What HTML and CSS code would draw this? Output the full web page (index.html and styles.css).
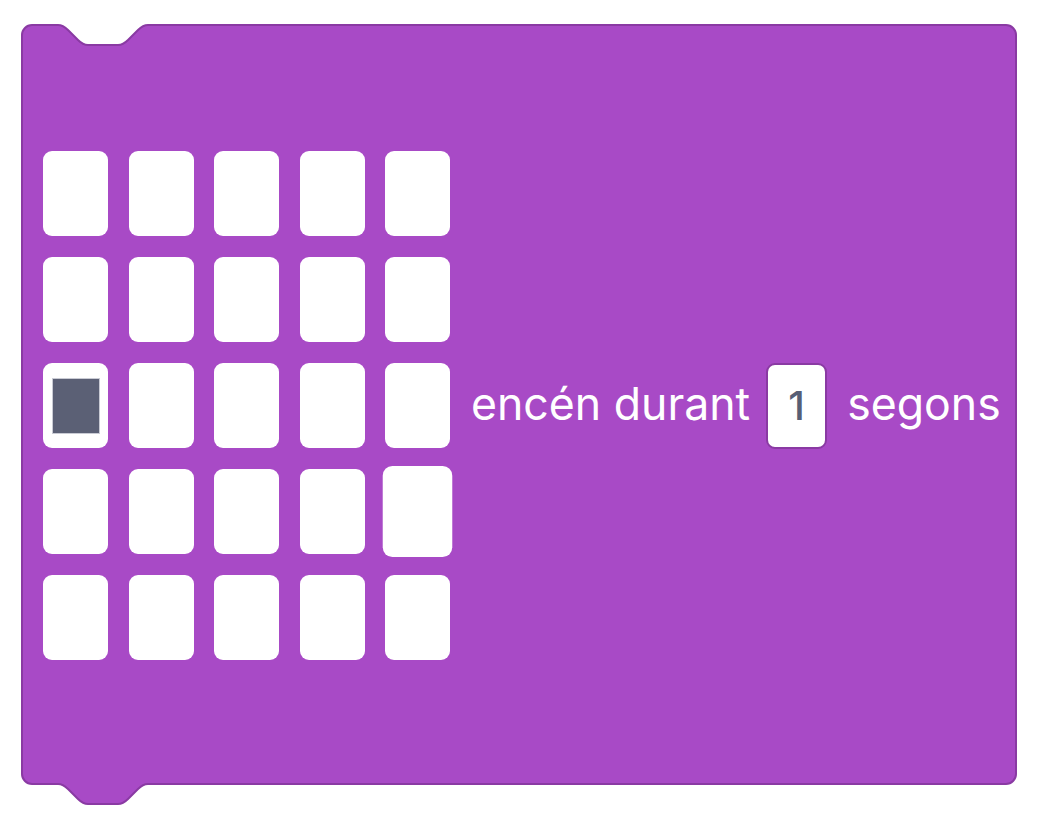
FILE: index.html
```html
<!DOCTYPE html>
<html>
<head>
<meta charset="utf-8">
<link rel="stylesheet" href="styles.css">
</head>
<body>
<div class="page">
  <div class="block">
    <svg class="block-shape" width="1000" height="790" viewBox="-3 -3 1000 790">
      <path d="M0,10 a10,10 0 0 1 10,-10 H36 c5,0 7.5,2.5 10,5 l10,10 c2.5,2.5 5,5 10,5 h30 c5,0 7.5,-2.5 10,-5 l10,-10 c2.5,-2.5 5,-5 10,-5 H984 a10,10 0 0 1 10,10 V749 a10,10 0 0 1 -10,10 H126 c-5,0 -7.5,2.5 -10,5 l-10,10 c-2.5,2.5 -5,5 -10,5 h-30 c-5,0 -7.5,-2.5 -10,-5 l-10,-10 c-2.5,-2.5 -5,-5 -10,-5 H10 a10,10 0 0 1 -10,-10 Z" fill="#a84ac6" stroke="#8a3aa3" stroke-width="2"/>
    </svg>
    <div class="content">
      <div class="matrix">
        <div class="cell"></div><div class="cell"></div><div class="cell"></div><div class="cell"></div><div class="cell"></div>
        <div class="cell"></div><div class="cell"></div><div class="cell"></div><div class="cell"></div><div class="cell"></div>
        <div class="cell lit"><span class="led"></span></div><div class="cell"></div><div class="cell"></div><div class="cell"></div><div class="cell"></div>
        <div class="cell"></div><div class="cell"></div><div class="cell"></div><div class="cell"></div><div class="cell hover"></div>
        <div class="cell"></div><div class="cell"></div><div class="cell"></div><div class="cell"></div><div class="cell"></div>
      </div>
      <span class="label first">encén durant</span>
      <span class="num-input">1</span>
      <span class="label">segons</span>
    </div>
  </div>
</div>
</body>
</html>
```

FILE: styles.css
```css
html, body {
  margin: 0;
  padding: 0;
  background: #ffffff;
}
body {
  font-family: Inter, "Liberation Sans", Arial, sans-serif;
}
.page {
  min-height: 828px;
  padding: 25px 0 0 22px;
  box-sizing: border-box;
}
.block {
  position: relative;
  width: 994px;
  height: 759px;
}
.block-shape {
  position: absolute;
  left: -3px;
  top: -3px;
  overflow: visible;
}
.content {
  position: relative;
  height: 100%;
  display: flex;
  align-items: center;
  padding-left: 21px;
  box-sizing: border-box;
}
.matrix {
  display: grid;
  grid-template-columns: repeat(5, 65px);
  grid-auto-rows: 85px;
  column-gap: 20.5px;
  row-gap: 21px;
  margin-top: 1px;
}
.cell {
  background: #ffffff;
  border-radius: 9px;
  display: flex;
  align-items: center;
  justify-content: center;
}
.cell.hover {
  transform: scale(1.07);
}
.led {
  width: 46px;
  height: 54px;
  background: #5b6075;
  box-shadow: 0 0 0 1px #c9cbd4;
  margin-top: 1px;
}
.label {
  color: #ffffff;
  font-size: 44.6px;
  line-height: 1;
}
.label.first {
  margin-left: 21px;
}
.num-input {
  width: 61px;
  height: 86px;
  box-sizing: border-box;
  margin: 2px 20px 0 16px;
  background: #ffffff;
  border: 2px solid #8a3aa3;
  border-radius: 9px;
  color: #575e75;
  font-size: 40px;
  font-weight: 500;
  display: flex;
  align-items: center;
  justify-content: center;
}
```
